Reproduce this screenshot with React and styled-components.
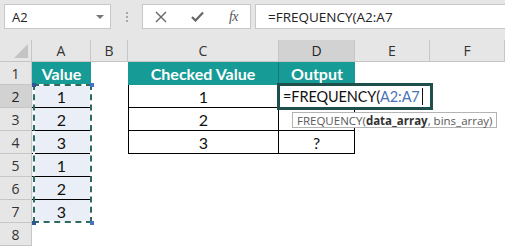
import React from 'react';
import styled, { createGlobalStyle } from 'styled-components';

const Global = createGlobalStyle`
  html, body { margin: 0; padding: 0; background: #fff; }
  body { width: 505px; height: 247px; overflow: hidden; font-family: Lato, "Liberation Sans", sans-serif; }
`;

const Frame = styled.div`
  width: 505px;
  height: 247px;
  display: flex;
  flex-direction: column;
  background: #fff;
  overflow: hidden;
`;

const Toolbar = styled.div`
  height: 40px;
  box-sizing: border-box;
  background: #e6e6e6;
  display: flex;
  align-items: flex-start;
  padding: 4px 0 0 4px;
`;

const Box = styled.div`
  height: 25px;
  box-sizing: border-box;
  background: #fff;
  border: 1px solid #c8c8c8;
  display: flex;
  align-items: center;
`;

const NameBox = styled(Box)`
  width: 107px;
  justify-content: space-between;
  padding: 0 6px 0 7px;
  font-family: "Open Sans", sans-serif;
  font-size: 13px;
  color: #222;
`;

const Caret = styled.span`
  width: 0;
  height: 0;
  border-left: 4px solid transparent;
  border-right: 4px solid transparent;
  border-top: 4px solid #777;
`;

const Grip = styled.div`
  width: 31px;
  height: 25px;
  display: flex;
  flex-direction: column;
  align-items: center;
  justify-content: center;
  gap: 2px;
`;

const Dot = styled.span`
  width: 2px;
  height: 2px;
  background: #a8a8a8;
`;

const Buttons = styled(Box)`
  width: 109px;
  justify-content: space-between;
  padding: 0 12px 0 12px;
`;

const Fx = styled.span`
  font-family: "Liberation Serif", serif;
  font-style: italic;
  font-size: 14px;
  color: #555;
  letter-spacing: -0.5px;
`;

const FormulaBar = styled(Box)`
  flex: 1;
  margin-left: 4px;
  border-right: none;
  padding-left: 12px;
  font-family: "Open Sans", sans-serif;
  font-size: 13.5px;
  color: #222;
`;

const Sheet = styled.div`
  position: relative;
  display: grid;
  grid-template-columns: 32px 59px 37px 151px 76px 75px 75px;
  grid-template-rows: 22px repeat(8, 23px);
`;

const Corner = styled.div`
  position: relative;
  background: #e6e6e6;
  border-right: 1px solid #c6c6c6;
  border-bottom: 1px solid #c6c6c6;
  box-sizing: border-box;
  &::after {
    content: "";
    position: absolute;
    right: 3px;
    bottom: 3px;
    width: 0;
    height: 0;
    border-left: 14px solid transparent;
    border-bottom: 14px solid #c4c4c4;
  }
`;

const ColHead = styled.div`
  box-sizing: border-box;
  background: ${p => (p.$sel ? '#d2d2d2' : '#e6e6e6')};
  border-right: 1px solid #c6c6c6;
  border-bottom: 1px solid #c6c6c6;
  display: flex;
  align-items: center;
  justify-content: center;
  font-family: "Open Sans", sans-serif;
  font-size: 14px;
  color: ${p => (p.$sel ? '#222' : '#333')};
`;

const RowHead = styled(ColHead)`
  font-size: 14px;
`;

const Cell = styled.div`
  box-sizing: border-box;
  display: flex;
  align-items: center;
  justify-content: center;
  font-family: Lato, "Liberation Sans", sans-serif;
  font-size: 16px;
  color: #111;
  background: ${p => p.$fill || '#fff'};
  border-bottom: ${p => (p.$b ? '1px solid #000' : 'none')};
  border-right: ${p => (p.$r ? '1px solid #000' : 'none')};
  border-left: ${p => (p.$l ? '1px solid #000' : 'none')};
`;

const HeadCell = styled.div`
  box-sizing: border-box;
  background: #179b96;
  color: #fff;
  font-family: Lato, "Liberation Sans", sans-serif;
  font-weight: 700;
  font-size: 16px;
  display: flex;
  align-items: center;
  justify-content: center;
  border-right: ${p => (p.$r ? '1px solid #127a75' : 'none')};
`;

const Marquee = styled.div`
  position: absolute;
  left: 33px;
  top: 44px;
  width: 59px;
  height: 139px;
  box-sizing: border-box;
  border: 2px solid #fff;
  &::after {
    content: "";
    position: absolute;
    inset: -2px;
    border: 2px dashed #2f6b5c;
  }
`;

const Handle = styled.span`
  position: absolute;
  width: 4px;
  height: 4px;
  background: ${p => p.$c};
  ${p => (p.$x === 'l' ? 'left: -3px;' : 'right: -4px;')}
  ${p => (p.$y === 't' ? 'top: -3px;' : 'bottom: -4px;')}
  z-index: 2;
`;

const EditBox = styled.div`
  position: absolute;
  left: 277px;
  top: 43px;
  width: 156px;
  height: 27px;
  box-sizing: border-box;
  border: 3px solid #1f4f4a;
  background: #fff;
  display: flex;
  align-items: center;
  padding-left: 3px;
  font-family: Lato, "Liberation Sans", sans-serif;
  font-size: 14.5px;
  letter-spacing: -0.1px;
  color: #111;
  white-space: nowrap;
`;

const Ref = styled.span`
  color: #4a72b8;
`;

const TextCaret = styled.span`
  display: inline-block;
  width: 1px;
  height: 17px;
  background: #111;
  margin-left: 2px;
`;

const Tip = styled.div`
  position: absolute;
  left: 292px;
  top: 72px;
  height: 16px;
  box-sizing: border-box;
  border: 1px solid #b4b4b4;
  background: #fff;
  padding: 0 4px 0 4px;
  display: flex;
  align-items: center;
  font-family: "Open Sans", sans-serif;
  font-size: 11.5px;
  color: #5a5a5a;
  white-space: nowrap;
`;

const Bold = styled.b`
  color: #333;
  font-weight: 700;
`;

const cols = ['A', 'B', 'C', 'D', 'E', 'F'];
const aVals = [1, 2, 3, 1, 2, 3];
const cVals = [1, 2, 3];

export default function App() {
  const rows = [];
  for (let r = 1; r <= 8; r++) {
    const cells = [];
    cells.push(<RowHead key="h" $sel={r === 2}>{r}</RowHead>);
    if (r === 1) cells.push(<HeadCell key="A">Value</HeadCell>);
    else if (r <= 7) cells.push(<Cell key="A" $fill="#e9eef7" $b={r < 7}>{aVals[r - 2]}</Cell>);
    else cells.push(<Cell key="A" />);
    cells.push(<Cell key="B" />);
    if (r === 1) {
      cells.push(<HeadCell key="C" $r>Checked Value</HeadCell>);
      cells.push(<HeadCell key="D">Output</HeadCell>);
    } else if (r <= 4) {
      cells.push(<Cell key="C" $l $r $b>{cVals[r - 2]}</Cell>);
      cells.push(<Cell key="D" $r $b>{r === 4 ? '?' : ''}</Cell>);
    } else {
      cells.push(<Cell key="C" />);
      cells.push(<Cell key="D" />);
    }
    cells.push(<Cell key="E" />);
    cells.push(<Cell key="F" />);
    rows.push(<React.Fragment key={r}>{cells}</React.Fragment>);
  }

  return (
    <Frame>
      <Global />
      <Toolbar>
        <NameBox>
          <span>A2</span>
          <Caret />
        </NameBox>
        <Grip>
          <Dot />
          <Dot />
          <Dot />
        </Grip>
        <Buttons>
          <svg width="12" height="12" viewBox="0 0 12 12">
            <path d="M1 1 L11 11 M11 1 L1 11" stroke="#666" strokeWidth="1.4" fill="none" />
          </svg>
          <svg width="13" height="11" viewBox="0 0 13 11">
            <path d="M1 6 L4.5 9.5 L12 1.5" stroke="#666" strokeWidth="2.2" fill="none" />
          </svg>
          <Fx>fx</Fx>
        </Buttons>
        <FormulaBar>=FREQUENCY(A2:A7</FormulaBar>
      </Toolbar>
      <Sheet>
        <Corner />
        {cols.map(c => (
          <ColHead key={c} $sel={c === 'D'}>{c}</ColHead>
        ))}
        {rows}
        <Marquee>
          <Handle $c="#2f5597" $x="l" $y="t" />
          <Handle $c="#4472c4" $x="r" $y="t" />
          <Handle $c="#2f5597" $x="l" $y="b" />
          <Handle $c="#4472c4" $x="r" $y="b" />
        </Marquee>
        <EditBox>
          =FREQUENCY(<Ref>A2:A7</Ref>
          <TextCaret />
        </EditBox>
        <Tip>
          FREQUENCY(<Bold>data_array</Bold>, bins_array)
        </Tip>
      </Sheet>
    </Frame>
  );
}
